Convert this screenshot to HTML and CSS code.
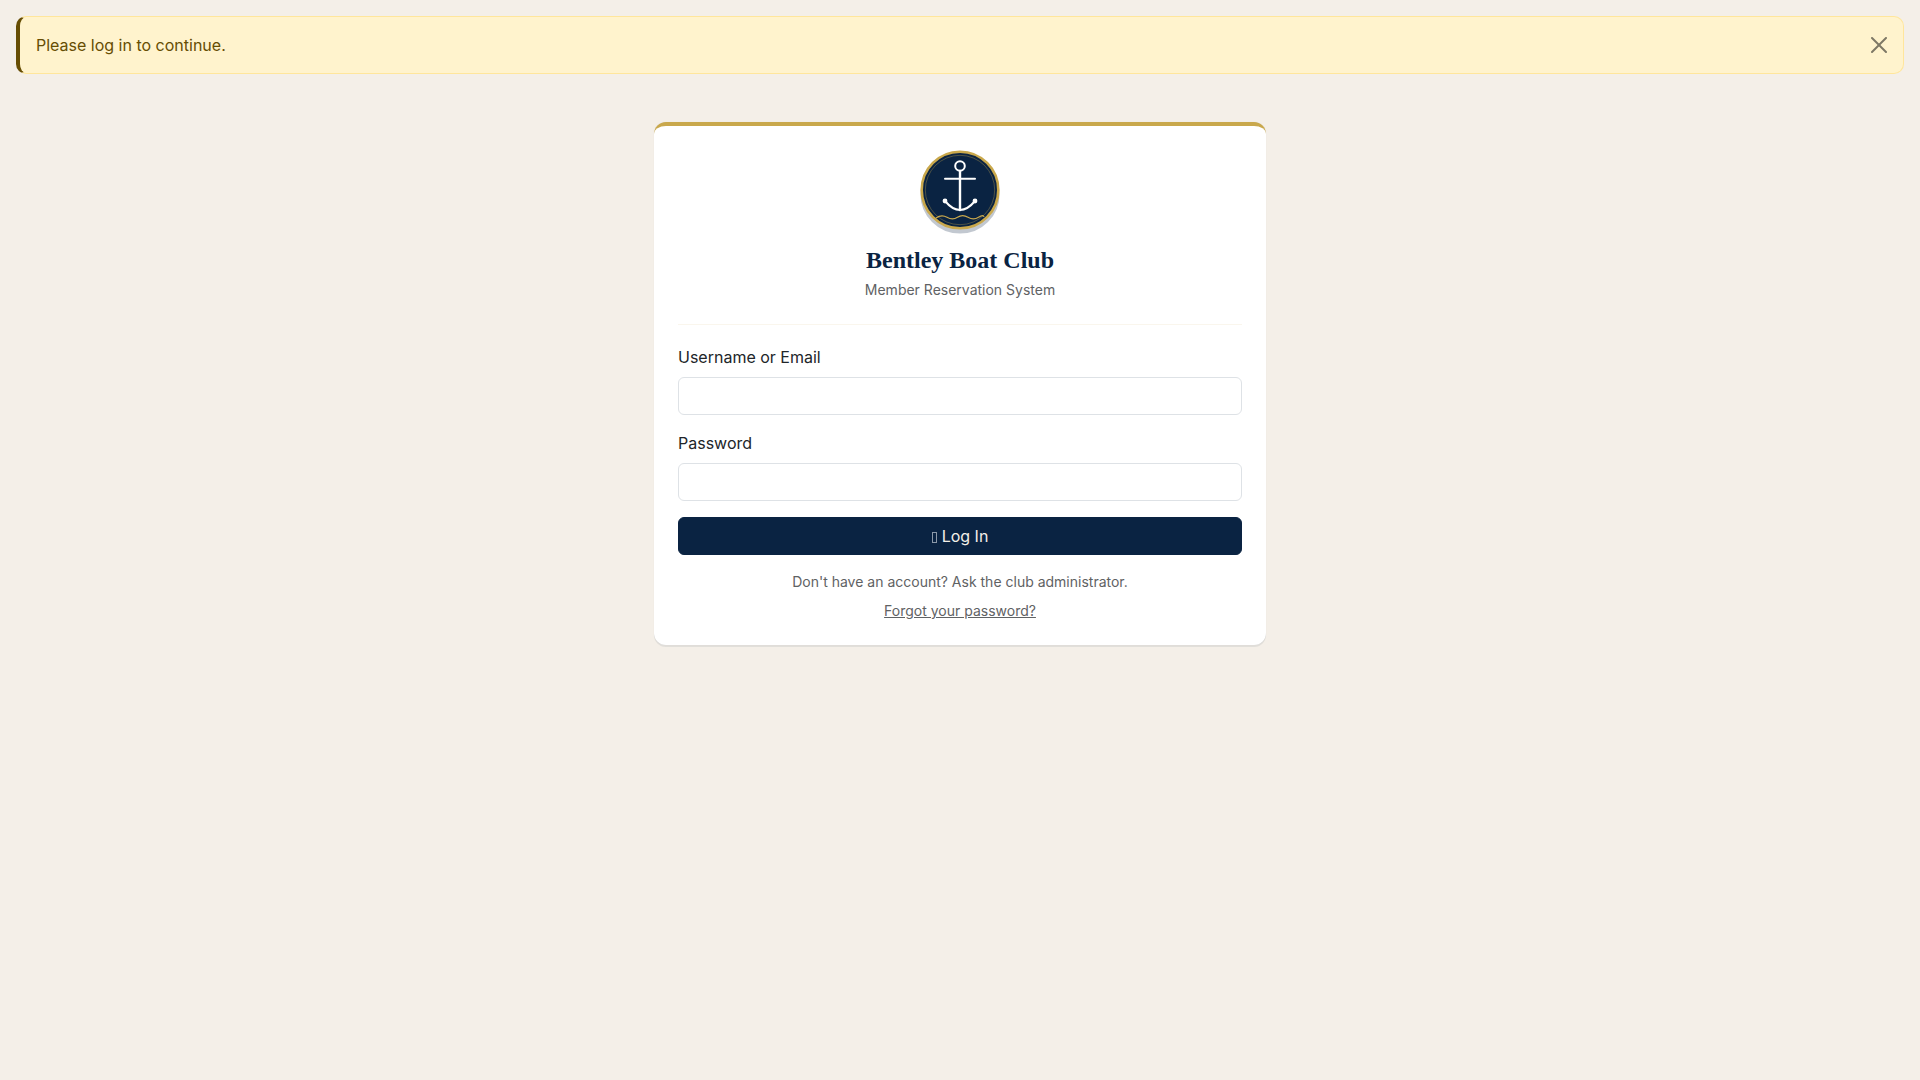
FILE: index.html
```html
<!DOCTYPE html>
<html lang="en">

<head>
    <meta charset="UTF-8">
    <meta name="viewport" content="width=device-width, initial-scale=1">
    <title>Log In - Bentley Boat Club</title>
    <link rel="stylesheet" href="styles.css">
</head>

<body>
    <div class="alert" role="alert">
        <span>Please log in to continue.</span>
        <button type="button" class="btn-close" aria-label="Close">
            <svg viewBox="0 0 16 16" width="16" height="16" aria-hidden="true">
                <path d="M.293.293a1 1 0 0 1 1.414 0L8 6.586 14.293.293a1 1 0 1 1 1.414 1.414L9.414 8l6.293 6.293a1 1 0 0 1-1.414 1.414L8 9.414l-6.293 6.293a1 1 0 0 1-1.414-1.414L6.586 8 .293 1.707a1 1 0 0 1 0-1.414z"/>
            </svg>
        </button>
    </div>

    <main class="login-card">
        <div class="login-header">
            <svg class="logo" viewBox="0 0 80 80" role="img" aria-label="Bentley Boat Club">
                <circle cx="40" cy="40" r="38.3" fill="#0a2342" stroke="#c9a84c" stroke-width="2.6"/>
                <circle cx="40" cy="40" r="34.7" fill="none" stroke="#c9a84c" stroke-width="0.7" opacity="0.5"/>
                <g fill="none" stroke="#fff" stroke-width="2" stroke-linecap="round">
                    <circle cx="40" cy="16" r="4.8"/>
                    <path d="M40 21v39" stroke-width="2.4"/>
                    <path d="M25 28.7h30"/>
                    <path d="M25 51q15 18 30 0"/>
                </g>
                <circle cx="25" cy="51" r="2.4" fill="#fff"/>
                <circle cx="55" cy="51" r="2.4" fill="#fff"/>
                <path d="M16 68Q21.5 64 27 67.3T37.5 67.3T48 67.3T58.5 67.3T64 67" fill="none" stroke="#c9a84c" stroke-width="1.2"/>
            </svg>
            <h1>Bentley Boat Club</h1>
            <p>Member Reservation System</p>
        </div>
        <hr>
        <form>
            <div class="form-group">
                <label for="username">Username or Email</label>
                <input type="text" id="username" name="username">
            </div>
            <div class="form-group">
                <label for="password">Password</label>
                <input type="password" id="password" name="password">
            </div>
            <button type="submit" class="btn-login"><span class="icon" aria-hidden="true"></span>Log In</button>
        </form>
        <div class="login-footer">
            <p>Don't have an account? Ask the club administrator.</p>
            <p><a href="#">Forgot your password?</a></p>
        </div>
    </main>
</body>

</html>
```
FILE: styles.css
```css
* {
    box-sizing: border-box;
}

body {
    margin: 0;
    padding: 16px;
    background-color: #f4efe8;
    color: #212529;
    font-family: Inter, sans-serif;
    font-size: 16px;
    line-height: 24px;
}

.alert {
    display: flex;
    align-items: center;
    justify-content: space-between;
    padding: 16px;
    border: 1px solid #ffe69c;
    border-left: 4px solid #664d03;
    border-radius: 10px;
    background-color: #fff3cd;
    color: #664d03;
}

.btn-close {
    display: flex;
    padding: 0;
    border: none;
    background: none;
    opacity: 0.5;
    cursor: pointer;
}

.login-card {
    max-width: 612px;
    margin: 48px auto 0;
    padding: 24px;
    border-top: 4px solid #c9a84c;
    border-radius: 12px;
    background-color: #fff;
    box-shadow: 0 2px 0 rgba(10, 35, 66, 0.08), 0 0 1px rgba(10, 35, 66, 0.1);
}

.login-header {
    text-align: center;
}

.logo {
    display: block;
    width: 80px;
    height: 80px;
    margin: 0 auto 16px;
    filter: drop-shadow(0 4px 0 rgba(10, 35, 66, 0.25));
}

h1 {
    margin: 0 0 4px;
    color: #0a2342;
    font-family: "Liberation Serif", serif;
    font-size: 24px;
    line-height: 29px;
}

.login-header p,
.login-footer {
    margin: 0;
    color: #5f6264;
    font-size: 14px;
    line-height: 21px;
}

hr {
    margin: 24px 0 20px;
    border: none;
    border-top: 1px solid #faf6ed;
}

.form-group {
    margin-bottom: 16px;
}

label {
    display: block;
    margin-bottom: 8px;
}

input {
    display: block;
    width: 100%;
    height: 38px;
    padding: 6px 12px;
    border: 1px solid #dee2e6;
    border-radius: 6px;
    font: inherit;
}

.btn-login {
    display: flex;
    align-items: center;
    justify-content: center;
    gap: 5px;
    width: 100%;
    padding: 6px 12px;
    border: 1px solid #0a2342;
    border-radius: 6px;
    background-color: #0a2342;
    color: #f4efe8;
    font: inherit;
    cursor: pointer;
}

.btn-login .icon {
    width: 5px;
    height: 11px;
    margin-top: 3px;
    border: 1px solid #8b98a8;
}

.login-footer {
    margin-top: 16px;
    text-align: center;
}

.login-footer p {
    margin: 0 0 8px;
}

.login-footer p:last-child {
    margin: 0;
}

.login-footer a {
    color: inherit;
}
```
